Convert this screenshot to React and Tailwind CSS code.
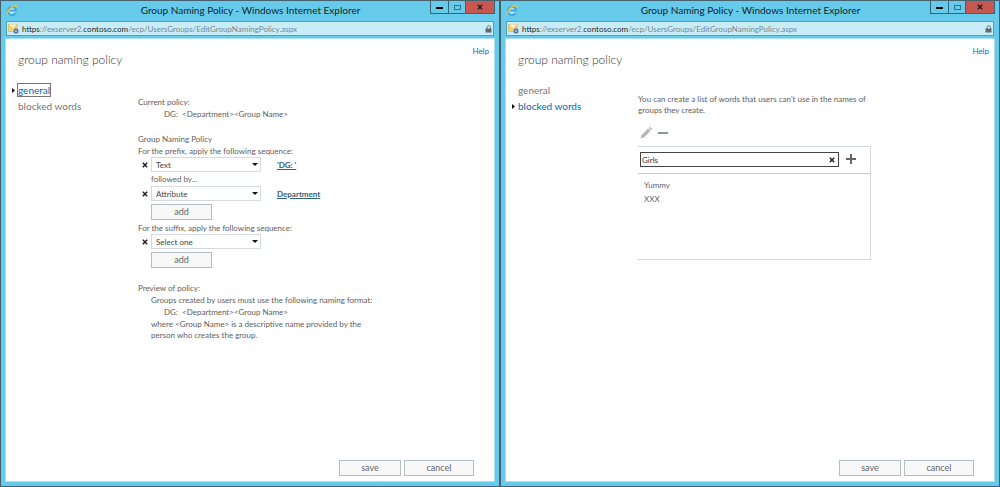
import { useState } from "react";

const IeIcon = () => (
  <svg className="w-3 h-3" viewBox="0 0 24 24" fill="none" aria-hidden="true">
    <circle cx="12" cy="13" r="9" fill="#a5e4fa" />
    <path d="M19.500 17.200A8.300 8.300 0 1 1 20.200 13.400H7.500" stroke="#3fa3e0" strokeWidth="3.600" />
    <path d="M4 22C-1 19 7 8 15 4c5-2.600 8-1.500 6 4" stroke="#e9bd3c" strokeWidth="2.800" />
  </svg>
);

const SiteIcon = () => (
  <svg className="w-[11px] h-[10px]" viewBox="0 0 22 20" aria-hidden="true">
    <rect x="1" y="1" width="17" height="14" fill="#f3d674" stroke="#c9a94e" />
    <path d="M1 1l8.500 8L18 1" fill="#fff6d2" stroke="#c9a94e" />
    <circle cx="16" cy="14" r="5" fill="#4a62ac" />
    <path d="M13 13h5l-2-2M19 15h-5l2 2" fill="none" stroke="#c9d6f5" strokeWidth="1.200" />
  </svg>
);

const LockIcon = () => (
  <svg className="w-[7px] h-2" viewBox="0 0 14 16" aria-hidden="true">
    <path d="M4 8V5a3.500 3.500 0 0 1 7 0v3" fill="none" stroke="#66757b" strokeWidth="2" />
    <rect x="1" y="7" width="12" height="8" fill="#5d6b70" />
  </svg>
);

const CrossIcon = () => (
  <svg className="w-[6px] h-[6px]" viewBox="0 0 6 6" aria-hidden="true">
    <path d="M.8.8l4.400 4.400M5.200.8L.8 5.200" stroke="#222" strokeWidth="1.500" />
  </svg>
);

const Window = ({ children }) => (
  <section className="flex-1 min-w-0 flex flex-col bg-[#66cbea] border border-[#46606d] px-1 pb-1">
    <div className="flex items-start h-5">
      <div className="flex-1 pl-px pt-[3px]">
        <IeIcon />
      </div>
      <h2 className="text-[10px] leading-[18px] text-[#12242c] whitespace-nowrap">
        Group Naming Policy - Windows Internet Explorer
      </h2>
      <div className="flex-1 flex justify-end">
        <div className="flex h-[13px] border border-t-0 border-[#35657a]">
          <button aria-label="Minimize" className="w-[18px] flex justify-center items-center border-r border-[#35657a]">
            <span className="w-[7px] h-[2px] mt-[2px] bg-black" />
          </button>
          <button aria-label="Maximize" className="w-[17px] flex justify-center items-center border-r border-[#35657a]">
            <span className="w-[7px] h-[5px] border border-[#357488]" />
          </button>
          <button aria-label="Close" className="w-7 flex justify-center items-center bg-[#c75850]">
            <CrossIcon />
          </button>
        </div>
      </div>
    </div>
    <div className="flex items-center h-[15px] mx-px px-px gap-[3px] bg-[#c9edf6] border border-[#5b9db1]">
      <SiteIcon />
      <p className="flex-1 text-[8px] leading-3 text-[#74888f] whitespace-nowrap">
        <span className="text-[#1c2b30]">https</span>://exserver2.<span className="text-[#1c2b30]">contoso.com</span>
        /ecp/UsersGroups/EditGroupNamingPolicy.aspx
      </p>
      <LockIcon />
    </div>
    <div className="flex-1 flex flex-col mt-[2px] bg-white border border-[#a9dfee]">{children}</div>
  </section>
);

const NavItem = ({ label, active, focused }) => (
  <li className="flex items-center h-4">
    <span className="w-[7px] pl-px">
      {active && (
        <svg className="w-[3px] h-[5px]" viewBox="0 0 3 5" aria-hidden="true">
          <path d="M0 0l3 2.500L0 5z" fill="#111" />
        </svg>
      )}
    </span>
    <a
      href="#"
      className={
        (active ? "text-[#0069b4]" : "text-[#777]") +
        (focused ? " outline outline-1 outline-[#777]" : "") +
        " text-[10px] leading-3"
      }
    >
      {label}
    </a>
  </li>
);

const FormButton = ({ children, className }) => (
  <button className={"h-4 border border-[#b3bec2] bg-[#f8f8f8] text-[9px] leading-[14px] text-[#666] " + className}>
    {children}
  </button>
);

const Page = ({ active, focused, children }) => (
  <Window>
    <header className="flex justify-between items-start pl-3 pr-[5px] pt-[6px]">
      <h1 className="mt-[7px] text-[12px] leading-4 font-light text-[#333]">group naming policy</h1>
      <a href="#" className="text-[8px] leading-3 text-[#0072c6]">Help</a>
    </header>
    <div className="flex-1 flex items-start pl-[5px] pt-[14px]">
      <nav className="w-[127px] shrink-0">
        <ul>
          <NavItem label="general" active={active === "general"} focused={focused} />
          <NavItem label="blocked words" active={active === "blocked"} />
        </ul>
      </nav>
      <main className="flex-1 text-[8px] leading-3 text-[#606060]">{children}</main>
    </div>
    <footer className="flex justify-end gap-[3px] pr-5 pb-[5px]">
      <FormButton className="w-[62px]">save</FormButton>
      <FormButton className="w-[70px]">cancel</FormButton>
    </footer>
  </Window>
);

const RuleRow = ({ label, options, link }) => (
  <div className="flex items-center h-[15px]">
    <button aria-label="Remove" className="w-[13px] pl-1">
      <CrossIcon />
    </button>
    <div className="relative w-[110px]">
      <select
        aria-label={label}
        className="block w-full h-[15px] appearance-none bg-white border border-[#d5d9e0] pl-1 text-[8px] leading-3 text-[#444]"
      >
        {options.map((o) => (
          <option key={o}>{o}</option>
        ))}
      </select>
      <svg className="absolute right-[3px] top-[6px] w-[6px] h-[3px] pointer-events-none" viewBox="0 0 6 3" aria-hidden="true">
        <path d="M0 0h6L3 3z" fill="#111" />
      </svg>
    </div>
    {link && (
      <a href="#" className="ml-4 font-bold underline text-[#33617c] whitespace-pre">{link}</a>
    )}
  </div>
);

const General = () => (
  <Page active="general" focused>
    <div className="pt-[14px]">
      <p>Current policy:</p>
      <p className="pl-[26px] whitespace-pre">{"DG:  <Department><Group Name>"}</p>
      <h3 className="mt-[13px]">Group Naming Policy</h3>
      <p>For the prefix, apply the following sequence:</p>
      <RuleRow label="First prefix" options={["Text", "Attribute"]} link="'DG: '" />
      <p className="pl-[13px] my-px">followed by...</p>
      <RuleRow label="Second prefix" options={["Attribute", "Text"]} link="Department" />
      <FormButton className="block w-[61px] ml-[13px] mt-[3px]">add</FormButton>
      <p className="mt-[2px]">For the suffix, apply the following sequence:</p>
      <RuleRow label="Suffix" options={["Select one", "Text", "Attribute"]} />
      <FormButton className="block w-[61px] ml-[13px] mt-[3px]">add</FormButton>
      <h3 className="mt-[14px]">Preview of policy:</h3>
      <div className="pl-[13px]">
        <p>Groups created by users must use the following naming format:</p>
        <p className="pl-[13px] whitespace-pre">{"DG:  <Department><Group Name>"}</p>
        <p className="mt-px leading-[11px]">
          where &lt;Group Name&gt; is a descriptive name provided by the
          <br />
          person who creates the group.
        </p>
      </div>
    </div>
  </Page>
);

const BlockedWords = () => {
  const [word, setWord] = useState("Girls");

  return (
    <Page active="blocked">
      <p className="pt-3 leading-[11px]">
        You can create a list of words that users can't use in the names of
        <br />
        groups they create.
      </p>
      <div className="flex items-center gap-[6px] h-[13px] mt-[10px] pl-[2px]">
        <button aria-label="Edit">
          <svg className="w-3 h-3" viewBox="0 0 12 12" fill="#b9b9b9" aria-hidden="true">
            <path d="M.5 11.500l1-3.500L8 1.500 10.500 4 4 10.500zM8.600.9L9.400.2q.5-.4 1 0l1.400 1.400q.4.500 0 1l-.7.8z" />
          </svg>
        </button>
        <button aria-label="Remove">
          <span className="block w-[10px] h-[2px] bg-[#8b969c]" />
        </button>
      </div>
      <div className="w-[233px] h-[114px] mt-[7px] border border-l-0 border-[#d3dadc]">
        <div className="flex items-center h-[27px] pl-[2px] pb-px gap-[7px] border-b border-[#c3cccf]">
          <div className="flex items-center w-[199px] h-[15px] pr-[3px] border border-[#444]">
            <input
              aria-label="Blocked word"
              value={word}
              onChange={(e) => setWord(e.target.value)}
              className="flex-1 min-w-0 h-3 pl-px text-[8px] leading-3 text-[#333] outline-none"
            />
            <button aria-label="Clear" onClick={() => setWord("")}>
              <CrossIcon />
            </button>
          </div>
          <button aria-label="Add" className="pb-[2px]">
            <svg className="w-[10px] h-[10px]" viewBox="0 0 10 10" aria-hidden="true">
              <path d="M5 0v10M0 5h10" stroke="#666" strokeWidth="2" />
            </svg>
          </button>
        </div>
        <ul className="pl-[6px] pt-1 leading-[14px]">
          <li>Yummy</li>
          <li>XXX</li>
        </ul>
      </div>
    </Page>
  );
};

const App = () => (
  <div className="flex min-h-screen font-[Lato,'Open_Sans',sans-serif]">
    <General />
    <BlockedWords />
  </div>
);

export default App;
